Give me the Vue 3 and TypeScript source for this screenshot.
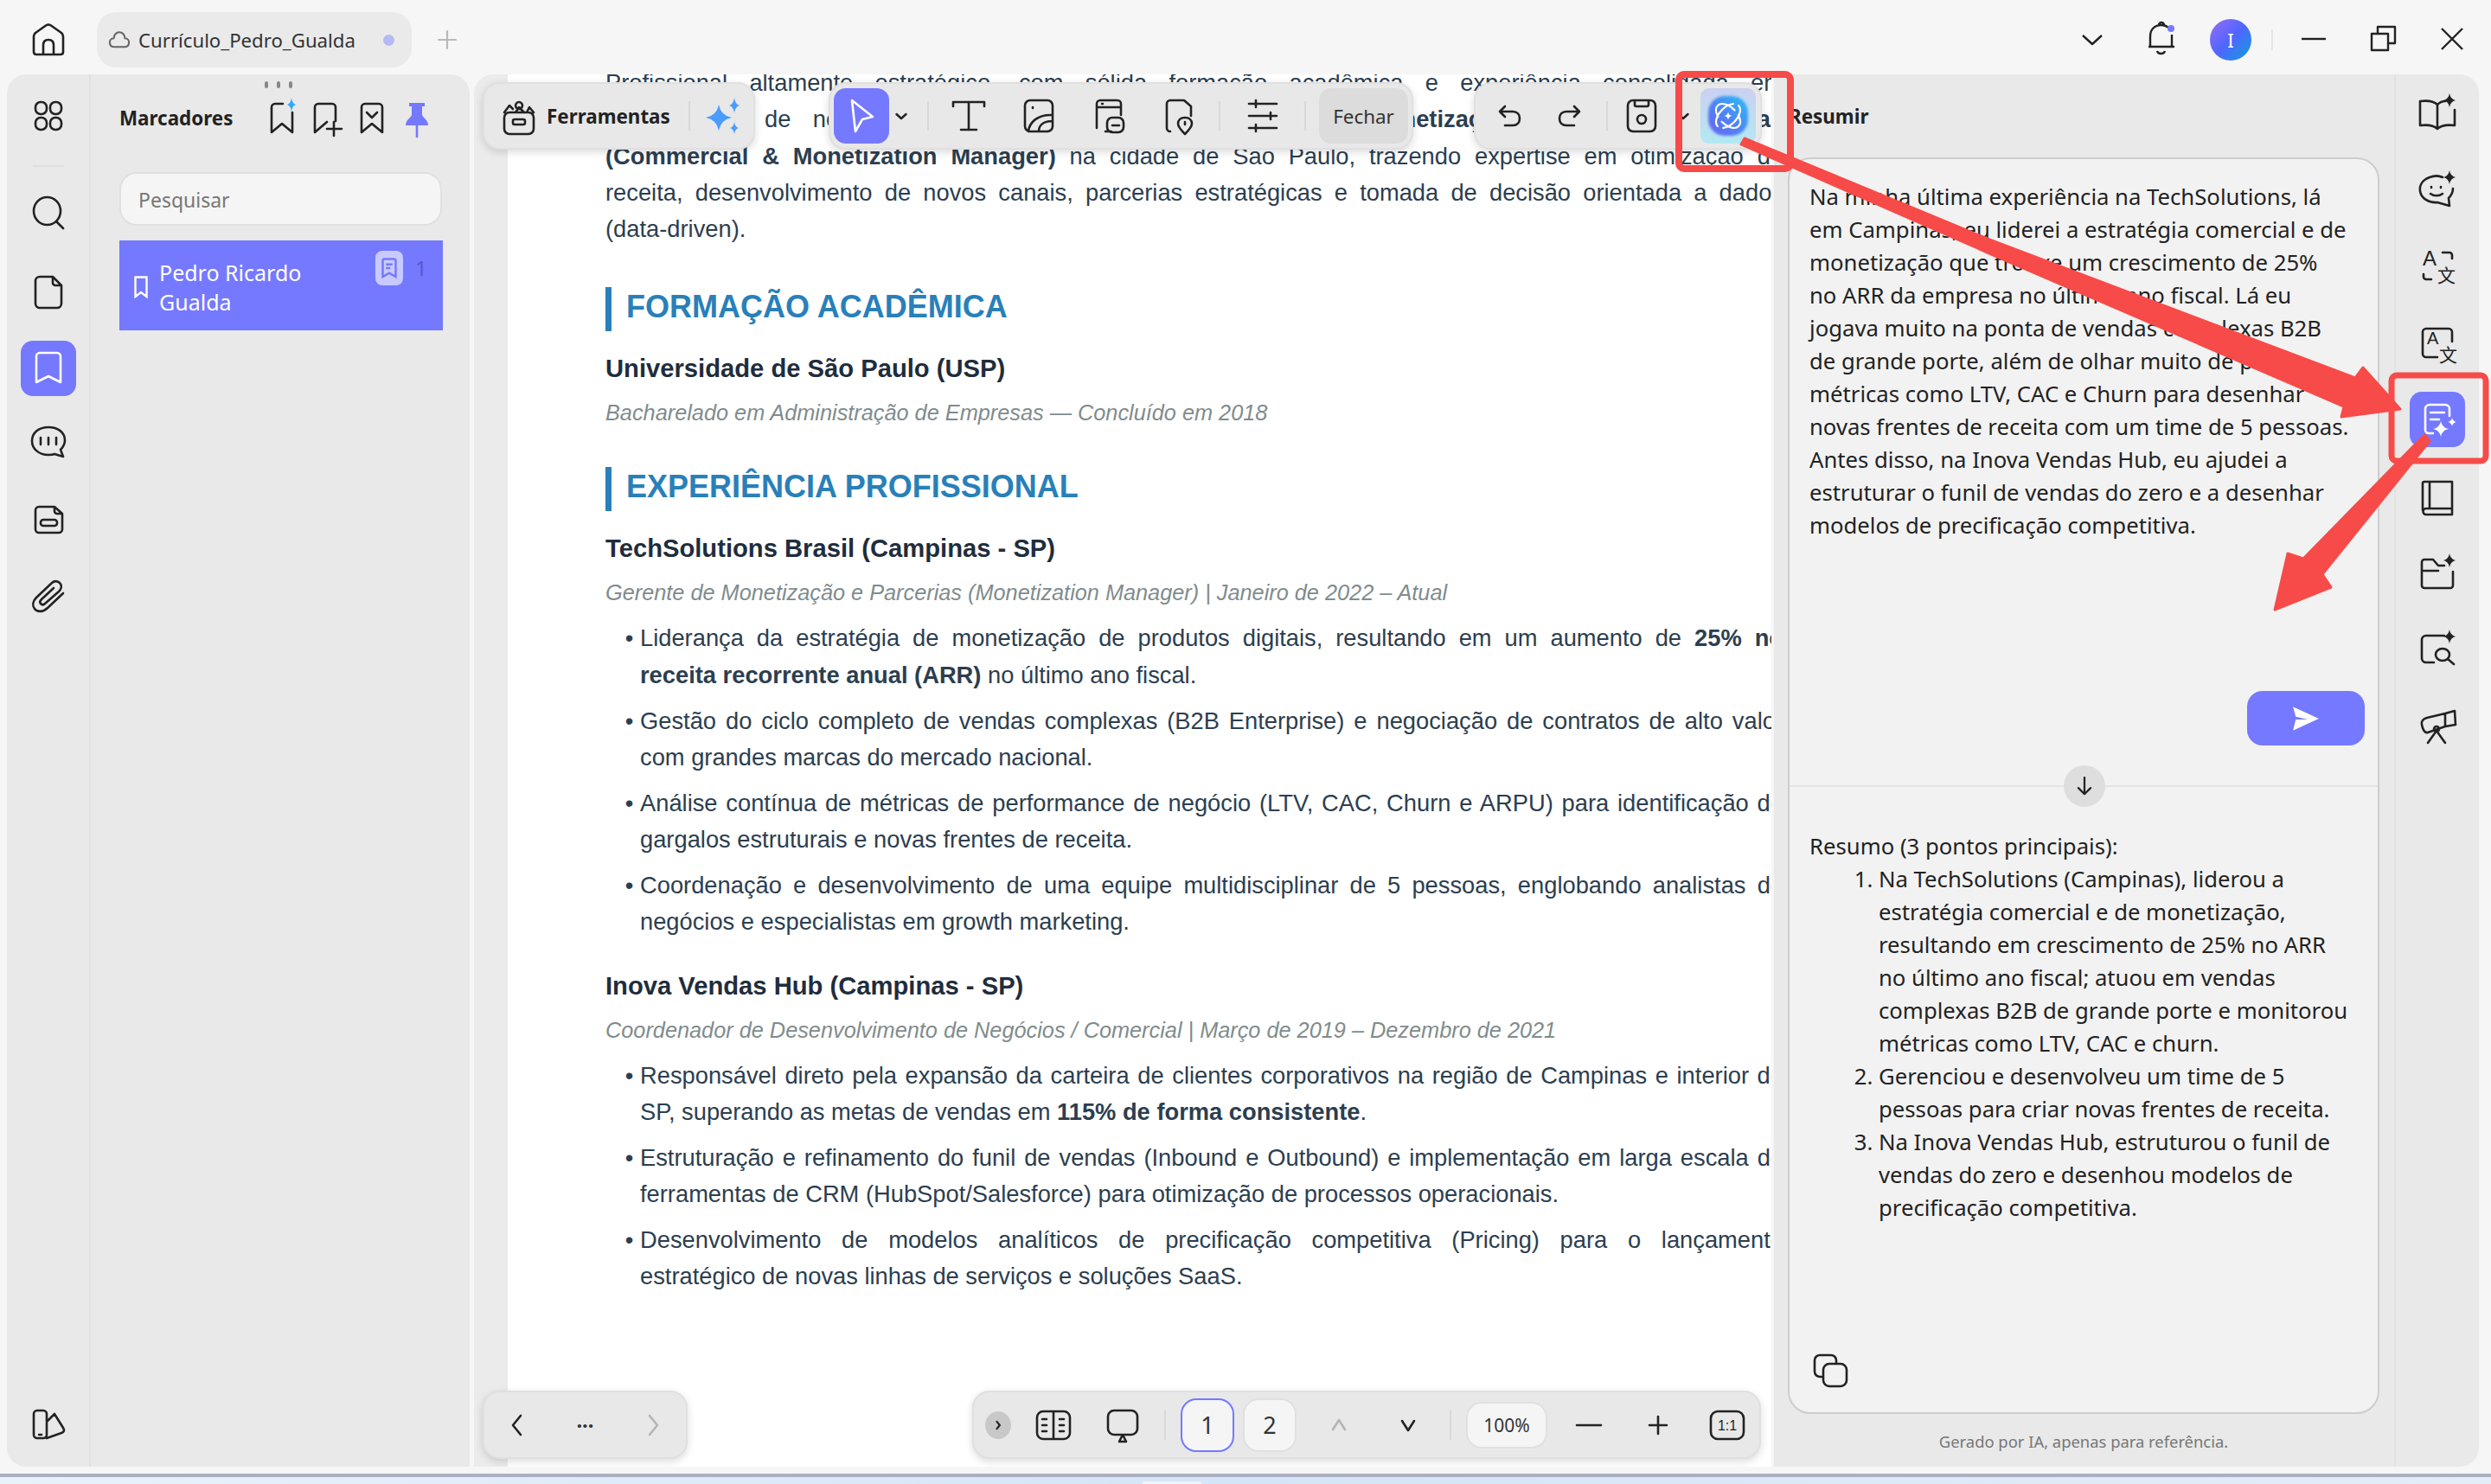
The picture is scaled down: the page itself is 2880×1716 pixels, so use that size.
<script setup lang="ts">
// helpers para montar os ícones (caixa de 48x48)
const rr = (x: number, y: number, w: number, h: number, r: number) =>
  `M${x + r} ${y}H${x + w - r}a${r} ${r} 0 0 1 ${r} ${r}V${y + h - r}a${r} ${r} 0 0 1 -${r} ${r}H${x + r}a${r} ${r} 0 0 1 -${r} -${r}V${y + r}a${r} ${r} 0 0 1 ${r} -${r}Z`
const star = (x: number, y: number, r: number, ry = r) => {
  const kx = r * 0.16
  const ky = ry * 0.16
  return `M${x} ${y - ry}Q${x + kx} ${y - ky} ${x + r} ${y}Q${x + kx} ${y + ky} ${x} ${y + ry}Q${x - kx} ${y + ky} ${x - r} ${y}Q${x - kx} ${y - ky} ${x} ${y - ry}Z`
}

const ic = {
  home: 'M7 20Q7 18 9 16L21 7.5Q24 5.5 27 7.5L39 16Q41 18 41 20V38Q41 41 38 41H10Q7 41 7 38ZM18 41V30Q18 24 24 24Q30 24 30 30V41',
  cloud: 'M14 38C8 38 5 34 5 29C5 24 9 21 13 21C13 14 18 9 24 9C30 9 35 14 35 21C40 21 43 25 43 29C43 34 40 38 34 38Z',
  grid: rr(9, 8, 13, 14, 6) + rr(26, 8, 13, 14, 6) + rr(9, 26, 13, 14, 6) + rr(26, 26, 13, 14, 6),
  search: 'M7 22a15.500 16 0 1 0 31 0a15.500 16 0 1 0 -31 0ZM33 34L41 42',
  page: 'M9 11a5 5 0 0 1 5-5H29L39 16V37a5 5 0 0 1 -5 5H14a5 5 0 0 1 -5-5ZM29 6V13a3 3 0 0 0 3 3H39',
  bookmark: 'M10 10a4 4 0 0 1 4-4H34a4 4 0 0 1 4 4V40L24 33L10 40Z',
  comment: 'M24 7C35 7 43 13 43 22C43 27 41 30 38 33L41 41L31 38C29 39 26 39 24 39C13 39 5 32 5 23C5 13 13 7 24 7ZM15 19V27M24 19V27M33 19V27',
  docSlot: 'M9 14a4 4 0 0 1 4-4H31L40 18V36a4 4 0 0 1 -4 4H13a4 4 0 0 1 -4-4ZM31 10V15a3 3 0 0 0 3 3H40' + rr(15, 25, 19, 7, 3),
  clip: 'M41 21L23 38C18 43 11 43 8 39C5 35 6 30 10 26L28 9C31 6 35 7 37 9C40 12 39 16 36 19L20 33C18 35 16 34 15 33C14 32 14 30 16 28L30 15',
  bookFan: rr(7, 8, 15, 32, 4) + 'M22 21L31 12L41 28C43 31 42 33 39 34L22 40M13 36H16',
  bmAi: 'M25 8H16a4 4 0 0 0 -4 4V41L24 31L36 41V18',
  bmPlus: 'M10 41V12a4 4 0 0 1 4-4H30a4 4 0 0 1 4 4V28M10 41L24 29M32 29V45M24 37H41',
  bmCheck: 'M12 12a4 4 0 0 1 4-4H32a4 4 0 0 1 4 4V41L24 31L12 41ZM18 18L24 24L30 18',
  pin: 'M15 7H33V11H30V21C32 25 37 27 37 33H11C11 27 16 25 18 21V11H15Z',
  toolbox: rr(7, 20, 34, 25, 6) + rr(17, 28, 14, 6, 2) + 'M24 8a4 4 0 1 0 0.100 0ZM7 20L13 12L17 16M20 20L24 14L30 20M33 20L36 14L41 20',
  cursor: 'M13 6L37 25L25 28L17 42Z',
  chev: 'M13 20L24 30L35 20',
  tee: 'M6 13V8H42V13M24 8V40M15 40H33',
  imgPage: rr(8, 6, 32, 36, 6) + 'M17 14v1M12 42C13 32 22 22 40 23M24 42C24 36 28 30 40 30',
  linkPage: 'M10 38V10a4 4 0 0 1 4-4H34a4 4 0 0 1 4 4V23M10 14H38M16 10h1M20 42H27M33 26H28a6 6 0 0 0 -6 6V37a6 6 0 0 0 6 6H35a6 6 0 0 0 6-6V32a6 6 0 0 0 -6-6ZM28 35H36',
  locPage: 'M14 42a4 4 0 0 1 -4-4V10a4 4 0 0 1 4-4H30L38 13V24M31 26C26 26 23 29 23 33C23 37 28 42 31 45C34 42 39 37 39 33C39 29 36 26 31 26ZM31 31v3',
  sliders: 'M8 10H40M8 24H40M8 38H40M16 6V14M33 20V28M16 34V42',
  undo: 'M19 13L13 19L19 25M13 19H28C33 19 36 22 36 27C36 32 33 35 28 35H19',
  redo: 'M29 13L35 19L29 25M35 19H20C15 19 12 22 12 27C12 32 15 35 20 35H29',
  save: rr(8, 6, 32, 36, 6) + 'M16 6V11a2 2 0 0 0 2 2H30a2 2 0 0 0 2-2V6M19 28a5 5 0 1 0 10 0a5 5 0 1 0 -10 0Z',
  bell: 'M11 33V21C11 13 16 8 24 8C27 8 30 9 32 11M36 19V33M9 33H39M19 38C20 42 27 42 28 38M21 8a3 3 0 0 1 6 0',
  min: 'M10 24H38',
  restore: 'M11 18H30V37H11ZM18 18V10H38V29H30',
  close: 'M12 12L36 36M36 12L12 36',
  plus: 'M14 24H34M24 14V34',
  left: 'M28 13L19 24L28 35',
  right: 'M20 13L29 24L20 35',
  up: 'M17 29L24 18L31 29',
  down: 'M17 19L24 30L31 19',
  bookView: rr(5, 8, 38, 32, 7) + 'M24 8V40M11 17h5M11 24h5M11 31h5M31 17h5M31 24h5M31 31h5',
  present: rr(7, 7, 34, 28, 7) + 'M24 35L20 43H28Z',
  one: rr(5, 8, 38, 32, 8),
  arrowDown: 'M24 10V37M14 27L24 37L34 27',
  copy: 'M14 31H12a6 6 0 0 1 -6-6V12a6 6 0 0 1 6-6H25a6 6 0 0 1 6 6V14' + rr(16, 16, 27, 26, 7),
  bookAi: 'M24 14C20 10 12 9 4 10V38C12 37 20 38 24 42C28 38 36 37 44 38V20M24 14V42M24 14C27 11 30 10 33 10',
  chatAi: 'M30 9C26 7 20 7 15 9C7 12 3 18 4 25C5 33 14 39 24 38L38 42L37 33C40 30 42 27 42 22M17 20v1M28 20v1M16 28C20 31 26 31 30 28',
  bracket: 'M30 8H38a3 3 0 0 1 3 3V15M8 33V36a3 3 0 0 0 3 3H17',
  boxLang: 'M41 22V11a4 4 0 0 0 -4-4H11a4 4 0 0 0 -4 4V36a4 4 0 0 0 4 4H24',
  sumDoc: 'M10 36V12a5 5 0 0 1 5-5H33a5 5 0 0 1 5 5V20M10 36a4 4 0 0 0 4 4H19M16 16H32M16 24H26',
  bookClosed: 'M7 40V9a2 2 0 0 1 2-2H41V38H11a3.500 3.500 0 0 0 0 7H41V38M15 7V38',
  folderAi: 'M6 17V11a3 3 0 0 1 3-3H19L25 15H32M6 17V38a3 3 0 0 0 3 3H39a3 3 0 0 0 3-3V22M6 21H25',
  searchAi: 'M32 8H11a5 5 0 0 0 -5 5V34a5 5 0 0 0 5 5H20M22 30a8 7 0 1 0 16 0a8 7 0 1 0 -16 0ZM36 35L43 41',
  scope: 'M6 22C5 18 8 15 12 14L33 9V24L13 31C9 32 7 27 6 22ZM33 9L44 6L45 22L33 24M23 29L13 43M23 29L33 43M20 27a3 3 0 1 0 6 0a3 3 0 1 0 -6 0Z',
}

const spark = {
  one: star(38, 9, 7, 8),
  ai: star(35, 9, 5, 8),
  trio: star(19, 26, 15, 15) + star(37, 12, 6, 9) + star(37, 38, 5, 7),
  sum: star(28, 35, 9) + star(41, 27, 5),
}

const rail = ['search', 'page'] as const
</script>

<template>
  <div class="app">
    <!-- barra de título -->
    <header class="titlebar">
      <svg class="ico home" viewBox="0 0 48 48"><path :d="ic.home" /></svg>
      <div class="tab">
        <svg class="ico cloud" viewBox="0 0 48 48"><path :d="ic.cloud" /></svg>
        <span class="tab-name">Currículo_Pedro_Gualda</span>
        <i class="tab-dot"></i>
      </div>
      <svg class="ico new-tab" viewBox="0 0 48 48"><path :d="ic.plus" /></svg>
      <div class="win">
        <svg class="ico thin" viewBox="0 0 48 48"><path :d="ic.chev" /></svg>
        <svg class="ico thin" viewBox="0 0 48 48">
          <path :d="ic.bell" />
          <circle class="violet" cx="35" cy="12" r="4" />
        </svg>
        <div class="avatar">I</div>
        <i class="win-sep"></i>
        <svg class="ico thin" viewBox="0 0 48 48"><path :d="ic.min" /></svg>
        <svg class="ico thin" viewBox="0 0 48 48"><path :d="ic.restore" /></svg>
        <svg class="ico thin" viewBox="0 0 48 48"><path :d="ic.close" /></svg>
      </div>
    </header>

    <main class="main">
      <!-- painel de marcadores -->
      <aside class="left">
        <nav class="rail">
          <svg class="ico r-first" viewBox="0 0 48 48"><path :d="ic.grid" /></svg>
          <hr class="rail-sep" />
          <div class="r-list">
            <svg v-for="n in rail" :key="n" class="ico" viewBox="0 0 48 48"><path :d="ic[n]" /></svg>
          </div>
          <div class="r-active">
            <svg class="ico" viewBox="0 0 48 48"><path :d="ic.bookmark" /></svg>
          </div>
          <svg class="ico r-item" viewBox="0 0 48 48"><path :d="ic.comment" /></svg>
          <svg class="ico r-item" viewBox="0 0 48 48"><path :d="ic.docSlot" /></svg>
          <svg class="ico r-item" viewBox="0 0 48 48"><path :d="ic.clip" /></svg>
          <svg class="ico r-bottom" viewBox="0 0 48 48"><path :d="ic.bookFan" /></svg>
        </nav>
        <section class="marks">
          <div class="grip"><i></i><i></i><i></i></div>
          <div class="marks-head">
            <h2 class="marks-title">Marcadores</h2>
            <svg class="ico" viewBox="0 0 48 48"><path :d="ic.bmAi" /><path class="sky" :d="spark.ai" /></svg>
            <svg class="ico" viewBox="0 0 48 48"><path :d="ic.bmPlus" /></svg>
            <svg class="ico" viewBox="0 0 48 48"><path :d="ic.bmCheck" /></svg>
            <svg class="ico" viewBox="0 0 48 48"><path class="violet" :d="ic.pin" /><path class="violet-line" d="M24 33V46" /></svg>
          </div>
          <div class="search">Pesquisar</div>
          <div class="mark-item">
            <svg class="mark-flag" viewBox="0 0 16 26"><path d="M1.500 1.500H14.500V24L8 19L1.500 24Z" /></svg>
            <span class="mark-text">Pedro Ricardo Gualda</span>
            <span class="mark-badge">
              <svg class="badge-ico" viewBox="0 0 48 48"><path d="M12 40V10a3 3 0 0 1 3-3H33a3 3 0 0 1 3 3V40L24 33ZM18 17H30M18 24H26" /></svg>
            </span>
            <span class="mark-num">1</span>
          </div>
        </section>
      </aside>

      <!-- documento -->
      <section class="viewer">
        <div class="gutter"></div>
        <article class="page">
          <div class="doc">
            <p class="ln just">Profissional altamente estratégico, com sólida formação acadêmica e experiência consolidada em</p>
            <p class="ln just">gestão B2B de negócios, busca a posição de <b>Gerente de Monetização, Vendas e Parcerias</b></p>
            <p class="ln just"><b>(Commercial &amp; Monetization Manager)</b> na cidade de São Paulo, trazendo expertise em otimização de</p>
            <p class="ln just">receita, desenvolvimento de novos canais, parcerias estratégicas e tomada de decisão orientada a dados</p>
            <p class="ln">(data-driven).</p>

            <h2 class="sec">FORMAÇÃO ACADÊMICA</h2>
            <h3 class="org">Universidade de São Paulo (USP)</h3>
            <p class="role">Bacharelado em Administração de Empresas — Concluído em 2018</p>

            <h2 class="sec sec2">EXPERIÊNCIA PROFISSIONAL</h2>
            <h3 class="org">TechSolutions Brasil (Campinas - SP)</h3>
            <p class="role">Gerente de Monetização e Parcerias (Monetization Manager) | Janeiro de 2022 – Atual</p>
            <ul class="list">
              <li>
                <span class="ln just">Liderança da estratégia de monetização de produtos digitais, resultando em um aumento de <b>25% no</b></span>
                <span class="ln"><b>receita recorrente anual (ARR)</b> no último ano fiscal.</span>
              </li>
              <li>
                <span class="ln just">Gestão do ciclo completo de vendas complexas (B2B Enterprise) e negociação de contratos de alto valor</span>
                <span class="ln">com grandes marcas do mercado nacional.</span>
              </li>
              <li>
                <span class="ln just">Análise contínua de métricas de performance de negócio (LTV, CAC, Churn e ARPU) para identificação de</span>
                <span class="ln">gargalos estruturais e novas frentes de receita.</span>
              </li>
              <li>
                <span class="ln just">Coordenação e desenvolvimento de uma equipe multidisciplinar de 5 pessoas, englobando analistas de</span>
                <span class="ln">negócios e especialistas em growth marketing.</span>
              </li>
            </ul>

            <h3 class="org org2">Inova Vendas Hub (Campinas - SP)</h3>
            <p class="role">Coordenador de Desenvolvimento de Negócios / Comercial | Março de 2019 – Dezembro de 2021</p>
            <ul class="list">
              <li>
                <span class="ln just">Responsável direto pela expansão da carteira de clientes corporativos na região de Campinas e interior de</span>
                <span class="ln">SP, superando as metas de vendas em <b>115% de forma consistente</b>.</span>
              </li>
              <li>
                <span class="ln just">Estruturação e refinamento do funil de vendas (Inbound e Outbound) e implementação em larga escala de</span>
                <span class="ln">ferramentas de CRM (HubSpot/Salesforce) para otimização de processos operacionais.</span>
              </li>
              <li>
                <span class="ln just">Desenvolvimento de modelos analíticos de precificação competitiva (Pricing) para o lançamento</span>
                <span class="ln">estratégico de novas linhas de serviços e soluções SaaS.</span>
              </li>
            </ul>
          </div>
        </article>

        <!-- barras flutuantes -->
        <div class="float tb-tools">
          <svg class="ico" viewBox="0 0 48 48"><path :d="ic.toolbox" /></svg>
          <span class="tb-label">Ferramentas</span>
          <i class="sep"></i>
          <svg class="ico" viewBox="0 0 48 48"><path class="blue-fill" :d="spark.trio" /></svg>
        </div>

        <div class="float tb-main">
          <button class="sel-btn">
            <svg class="ico" viewBox="0 0 48 48"><path :d="ic.cursor" /></svg>
          </button>
          <svg class="ico small" viewBox="0 0 48 48"><path :d="ic.chev" /></svg>
          <i class="sep wide sep-a"></i>
          <div class="tb-group">
            <svg class="ico" viewBox="0 0 48 48"><path :d="ic.tee" /></svg>
            <svg class="ico" viewBox="0 0 48 48"><path :d="ic.imgPage" /></svg>
            <svg class="ico" viewBox="0 0 48 48"><path :d="ic.linkPage" /></svg>
            <svg class="ico" viewBox="0 0 48 48"><path :d="ic.locPage" /></svg>
          </div>
          <i class="sep wide sep-b"></i>
          <svg class="ico" viewBox="0 0 48 48"><path :d="ic.sliders" /></svg>
          <i class="sep wide sep-c"></i>
          <button class="close-btn">Fechar</button>
        </div>

        <div class="float tb-edit">
          <svg class="ico" viewBox="0 0 48 48"><path :d="ic.undo" /></svg>
          <svg class="ico" viewBox="0 0 48 48"><path :d="ic.redo" /></svg>
          <i class="sep"></i>
          <svg class="ico" viewBox="0 0 48 48"><path :d="ic.save" /></svg>
          <svg class="ico small" viewBox="0 0 48 48"><path :d="ic.chev" /></svg>
          <div class="ai-btn">
            <svg class="ai-ico" viewBox="0 0 64 64">
              <defs>
                <linearGradient id="aiBg" x1="0" y1="0" x2="0" y2="1">
                  <stop offset="0" stop-color="#cbd0f2" />
                  <stop offset="1" stop-color="#b2e9f1" />
                </linearGradient>
                <linearGradient id="aiBall" x1="0" y1="1" x2="1" y2="0">
                  <stop offset="0" stop-color="#6a63f0" />
                  <stop offset="0.5" stop-color="#4c86f6" />
                  <stop offset="1" stop-color="#29c0f7" />
                </linearGradient>
                <filter id="aiSoft"><feGaussianBlur stdDeviation="1.400" /></filter>
              </defs>
              <rect width="64" height="64" rx="10" fill="url(#aiBg)" />
              <rect x="9" y="9" width="46" height="46" rx="19" fill="url(#aiBall)" filter="url(#aiSoft)" />
              <g fill="none" stroke="#fff" stroke-width="2.200" stroke-linecap="round">
                <ellipse cx="32" cy="32" rx="17" ry="10" transform="rotate(-45 32 32)" stroke-dasharray="36 7" />
                <ellipse cx="32" cy="32" rx="17" ry="10" transform="rotate(45 32 32)" stroke-dasharray="36 7" stroke-dashoffset="14" />
              </g>
              <path fill="#fff" :d="star(32, 32, 4.500, 4.500)" />
            </svg>
          </div>
        </div>

        <div class="float tb-nav">
          <svg class="ico" viewBox="0 0 48 48"><path :d="ic.left" /></svg>
          <span class="dots">···</span>
          <svg class="ico muted" viewBox="0 0 48 48"><path :d="ic.right" /></svg>
        </div>

        <div class="float tb-page">
          <span class="toggle"><svg viewBox="0 0 48 48" class="ico tiny"><path :d="ic.right" /></svg></span>
          <svg class="ico" viewBox="0 0 48 48"><path :d="ic.bookView" /></svg>
          <svg class="ico" viewBox="0 0 48 48"><path :d="ic.present" /></svg>
          <i class="sep"></i>
          <span class="pg on">1</span>
          <span class="pg">2</span>
          <svg class="ico muted" viewBox="0 0 48 48"><path :d="ic.up" /></svg>
          <svg class="ico" viewBox="0 0 48 48"><path :d="ic.down" /></svg>
          <i class="sep"></i>
          <span class="zoom">100%</span>
          <svg class="ico" viewBox="0 0 48 48"><path :d="ic.min" /></svg>
          <svg class="ico" viewBox="0 0 48 48"><path :d="ic.plus" /></svg>
          <svg class="ico" viewBox="0 0 48 48">
            <path :d="ic.one" />
            <text class="ico-txt" x="24" y="30" text-anchor="middle" font-size="16">1:1</text>
          </svg>
        </div>
      </section>

      <!-- painel de IA -->
      <aside class="ai">
        <div class="ai-main">
          <h2 class="ai-title">Resumir</h2>
          <div class="card">
            <div class="card-top">
              <p class="card-text">
                Na minha última experiência na TechSolutions, lá<br />
                em Campinas, eu liderei a estratégia comercial e de<br />
                monetização que trouxe um crescimento de 25%<br />
                no ARR da empresa no último ano fiscal. Lá eu<br />
                jogava muito na ponta de vendas complexas B2B<br />
                de grande porte, além de olhar muito de perto<br />
                métricas como LTV, CAC e Churn para desenhar<br />
                novas frentes de receita com um time de 5 pessoas.<br />
                Antes disso, na Inova Vendas Hub, eu ajudei a<br />
                estruturar o funil de vendas do zero e a desenhar<br />
                modelos de precificação competitiva.
              </p>
              <button class="send">
                <svg viewBox="0 0 30 28" class="send-ico"><path d="M1 1L29 14L1 27L4 15H17L4 12Z" /></svg>
              </button>
              <span class="scroll-down">
                <svg class="ico" viewBox="0 0 48 48"><path :d="ic.arrowDown" /></svg>
              </span>
            </div>
            <div class="card-bottom">
              <p class="card-text">Resumo (3 pontos principais):</p>
              <ol class="sum">
                <li>Na TechSolutions (Campinas), liderou a<br />estratégia comercial e de monetização,<br />resultando em crescimento de 25% no ARR<br />no último ano fiscal; atuou em vendas<br />complexas B2B de grande porte e monitorou<br />métricas como LTV, CAC e churn.</li>
                <li>Gerenciou e desenvolveu um time de 5<br />pessoas para criar novas frentes de receita.</li>
                <li>Na Inova Vendas Hub, estruturou o funil de<br />vendas do zero e desenhou modelos de<br />precificação competitiva.</li>
              </ol>
              <svg class="ico copy" viewBox="0 0 48 48"><path :d="ic.copy" /></svg>
            </div>
          </div>
          <p class="ai-note">Gerado por IA, apenas para referência.</p>
        </div>
        <nav class="ai-rail">
          <svg class="ico" viewBox="0 0 48 48"><path :d="ic.bookAi" /><path class="ink" :d="spark.one" /></svg>
          <svg class="ico" viewBox="0 0 48 48"><path :d="ic.chatAi" /><path class="ink" :d="spark.one" /></svg>
          <svg class="ico" viewBox="0 0 48 48">
            <path :d="ic.bracket" />
            <text class="ico-txt" x="7" y="23" font-size="24">A</text>
            <text class="ico-txt cjk" x="24" y="42" font-size="21">文</text>
          </svg>
          <svg class="ico" viewBox="0 0 48 48">
            <path :d="ic.boxLang" />
            <text class="ico-txt" x="12" y="25" font-size="20">A</text>
            <text class="ico-txt cjk" x="26" y="45" font-size="21">文</text>
          </svg>
          <div class="ai-active">
            <svg class="ico" viewBox="0 0 48 48"><path :d="ic.sumDoc" /><path class="white-fill" :d="spark.sum" /></svg>
          </div>
          <svg class="ico" viewBox="0 0 48 48"><path :d="ic.bookClosed" /></svg>
          <svg class="ico" viewBox="0 0 48 48"><path :d="ic.folderAi" /><path class="ink" :d="spark.one" /></svg>
          <svg class="ico" viewBox="0 0 48 48"><path :d="ic.searchAi" /><path class="ink" :d="spark.one" /></svg>
          <svg class="ico" viewBox="0 0 48 48"><path :d="ic.scope" /></svg>
        </nav>
      </aside>
    </main>

    <!-- faixa da área de trabalho -->
    <footer class="desk"><i class="desk-tab"></i></footer>

    <!-- anotações em vermelho sobre a captura -->
    <svg class="marks-overlay" viewBox="0 0 2880 1716">
      <g fill="#f74b49" stroke="#f74b49" stroke-linejoin="round" stroke-width="3">
        <path d="M2017 160L2300 277L2723 437L2732 425L2775 473L2707 482L2710 470L2300 293L2013 167Z" />
        <path d="M2803 503L2809 510L2685 664L2695 679L2630 705L2645 640L2663 646Z" />
      </g>
      <g fill="none" stroke="#f74b49" stroke-linejoin="round">
        <rect x="1941" y="86" width="129" height="109" rx="6" stroke-width="8" />
        <rect x="2765" y="434" width="109" height="99" rx="6" stroke-width="7" />
      </g>
    </svg>
  </div>
</template>

<style scoped>
.app {
  position: relative;
  width: 2880px;
  height: 1716px;
  display: flex;
  flex-direction: column;
  overflow: hidden;
  background: #f6f6f6;
  color: #222;
  font-family: "Noto Sans", sans-serif;
}

.ico {
  width: 48px;
  height: 48px;
  flex: none;
  fill: none;
  stroke: #222;
  stroke-width: 2.6;
  stroke-linecap: round;
  stroke-linejoin: round;
}
.ico.thin { stroke-width: 2.4; stroke-linecap: butt; }
.ico.small { width: 24px; height: 24px; stroke-width: 5; }
.ico.tiny { width: 18px; height: 18px; stroke-width: 6; }
.ico.muted { stroke: #b5b5b5; }
.ico-txt {
  fill: #222;
  stroke: none;
  font-family: "Liberation Sans", sans-serif;
}
.ico-txt.cjk { font-family: "Noto Sans CJK SC", sans-serif; }
.ink { fill: #222; stroke: none; }
.sky { fill: #35a7ff; stroke: none; }
.violet { fill: #7579ff; stroke: none; }
.violet-line { stroke: #7579ff; }
.blue-fill { fill: #4a9cff; stroke: none; }
.white-fill { fill: #fff; stroke: none; }

/* barra de título */
.titlebar {
  height: 86px;
  flex: none;
  box-sizing: border-box;
  display: flex;
  align-items: center;
  padding: 6px 0 0 32px;
}
.tab {
  margin-left: 32px;
  width: 364px;
  height: 64px;
  border-radius: 22px;
  background: #eaeaea;
  display: flex;
  align-items: center;
  padding-left: 12px;
  box-sizing: border-box;
}
.cloud { width: 28px; height: 28px; stroke: #666; stroke-width: 3.500; }
.tab-name { margin-left: 8px; font-size: 22.200px; color: #333; white-space: nowrap; }
.tab-dot {
  width: 13px;
  height: 13px;
  border-radius: 50%;
  background: #b6b9f6;
  margin-left: 32px;
}
.new-tab { margin-left: 17px; stroke: #b9b9b9; stroke-width: 2.200; }
.win {
  margin-left: auto;
  display: flex;
  align-items: center;
  gap: 32px;
  padding-right: 21px;
}
.win .thin { margin-top: -2px; }
.win-sep {
  width: 2px;
  height: 24px;
  background: #e6e6e6;
  margin: 0 -9px;
}
.avatar {
  width: 48px;
  height: 48px;
  border-radius: 50%;
  background: linear-gradient(135deg, #9a6cf5, #4f66ff 50%, #0f9fd8);
  color: #fff;
  font-size: 22px;
  display: flex;
  align-items: center;
  justify-content: center;
}

/* corpo */
.main {
  flex: 1;
  min-height: 0;
  display: flex;
  padding-left: 8px;
  padding-right: 14px;
}
.left {
  width: 535px;
  flex: none;
  display: flex;
  background: #e9e9e9;
  border-radius: 22px 22px 0 22px;
}
.rail {
  width: 97px;
  flex: none;
  box-sizing: border-box;
  border-right: 2px solid #e1e1e1;
  display: flex;
  flex-direction: column;
  align-items: center;
  padding-top: 24px;
}
.rail-sep {
  width: 36px;
  height: 2px;
  border: 0;
  background: #dedede;
  margin: 33px 0 29px;
}
.r-list {
  display: flex;
  flex-direction: column;
  align-items: center;
  gap: 44px;
}
.r-active {
  margin-top: 32px;
  width: 64px;
  height: 64px;
  border-radius: 14px;
  background: #7579ff;
  display: flex;
  align-items: center;
  justify-content: center;
}
.r-active .ico { stroke: #fff; }
.r-item { margin-top: 41px; }
.r-active + .r-item { margin-top: 29px; }
.r-bottom { margin-top: auto; margin-bottom: 25px; }

.marks {
  flex: 1;
  position: relative;
  padding-left: 33px;
}
.grip {
  position: absolute;
  left: 201px;
  top: 8px;
  display: flex;
  gap: 10px;
}
.grip i {
  width: 4px;
  height: 8px;
  border-radius: 2px;
  background: #888;
}
.marks-head {
  height: 100px;
  display: flex;
  align-items: center;
  gap: 4px;
}
.marks-title {
  width: 160px;
  margin: 0;
  font-size: 22.400px;
  font-weight: 700;
  color: #222;
}
.search {
  margin-top: 13px;
  width: 373px;
  height: 62px;
  box-sizing: border-box;
  border: 2px solid #e0e0e0;
  border-radius: 20px;
  background: #f5f5f5;
  padding-left: 20px;
  line-height: 60px;
  font-size: 23px;
  color: #777;
}
.mark-item {
  margin-top: 17px;
  width: 374px;
  height: 104px;
  box-sizing: border-box;
  background: #7579ff;
  display: flex;
  align-items: flex-start;
  padding-left: 17px;
}
.mark-flag {
  width: 16px;
  height: 26px;
  margin-top: 41px;
  fill: none;
  stroke: #fff;
  stroke-width: 2.400;
}
.mark-text {
  width: 230px;
  margin: 20px 0 0 13px;
  font-size: 25px;
  line-height: 34px;
  color: #fff;
}
.mark-badge {
  width: 32px;
  height: 40px;
  margin: 12px 0 0 20px;
  border-radius: 8px;
  background: #c8caff;
  display: flex;
  align-items: center;
  justify-content: center;
}
.badge-ico {
  width: 30px;
  height: 30px;
  fill: none;
  stroke: #7579ff;
  stroke-width: 4;
}
.mark-num {
  margin: 12px 0 0 14px;
  font-size: 24px;
  line-height: 40px;
  color: #5659c6;
}

/* documento */
.viewer {
  width: 1500px;
  flex: none;
  margin-left: 5px;
  position: relative;
  display: flex;
  overflow: hidden;
}
.gutter {
  width: 39px;
  flex: none;
  background: #ebebeb;
  border-radius: 22px 0 0 0;
}
.page {
  flex: 1;
  background: #fff;
  overflow: hidden;
  padding-left: 113px;
}
.doc {
  width: 1362px;
  margin-top: -11px;
  font-family: "Liberation Sans", Arial, sans-serif;
  font-size: 27.300px;
  color: #2c3e50;
}
.ln {
  display: block;
  margin: 0;
  line-height: 42.300px;
}
.just {
  text-align: justify;
  text-align-last: justify;
}
.sec {
  margin: 46px 0 3px;
  height: 51px;
  box-sizing: border-box;
  border-left: 7px solid #2980b9;
  padding-left: 17px;
  line-height: 46px;
  font-size: 36px;
  font-weight: 700;
  color: #2980b9;
}
.sec2 { margin: 44px 0 0; }
.org {
  margin: 23px 0 0;
  line-height: 40px;
  font-size: 29.200px;
  font-weight: 700;
  color: #1f2d3d;
}
.org2 { margin-top: 32px; }
.role {
  margin: 12px 0 0;
  line-height: 38px;
  font-size: 25.300px;
  font-style: italic;
  color: #7f8c8d;
}
.list {
  margin: 13px 0 0;
  padding: 0 0 0 40px;
  list-style-type: "• ";
}
.list li + li { margin-top: 10.600px; }

/* barras flutuantes */
.float {
  position: absolute;
  box-sizing: border-box;
  height: 78px;
  display: flex;
  align-items: center;
  background: #e8e8e8;
  border: 2px solid #e0e0e0;
  border-radius: 20px;
  box-shadow: 0 3px 10px rgba(0, 0, 0, 0.14);
}
.sep {
  width: 2px;
  height: 34px;
  flex: none;
  background: #d8d8d8;
}
.sep.wide { margin: 0 22px; }
.sep.sep-a { margin-left: 18px; }
.sep.sep-b { margin-right: 25px; }
.sep.sep-c { margin-left: 24px; }
.tb-tools {
  left: 10px;
  top: 9px;
  width: 315px;
  padding-left: 16px;
}
.tb-label {
  margin-left: 8px;
  font-size: 22.400px;
  font-weight: 700;
  color: #222;
}
.tb-tools .sep { margin: 0 14px 0 21px; }
.tb-main {
  left: 410px;
  top: 9px;
  width: 676px;
  padding-left: 4px;
}
.sel-btn {
  width: 64px;
  height: 64px;
  border: 0;
  padding: 0;
  border-radius: 14px;
  background: #7579ff;
  display: flex;
  align-items: center;
  justify-content: center;
  margin-right: 2px;
}
.sel-btn .ico { stroke: #fff; }
.tb-group { display: flex; gap: 33px; }
.close-btn {
  margin-left: -7px;
  width: 103px;
  height: 64px;
  border: 0;
  padding: 0;
  border-radius: 14px;
  background: #dcdcdc;
  font-family: inherit;
  font-size: 22.400px;
  color: #333;
}
.tb-edit {
  left: 1156px;
  top: 9px;
  width: 333px;
  padding-left: 15px;
  gap: 22px;
}
.tb-edit .small { margin-left: -10px; }
.tb-edit .sep { margin: 0 -7px 0 -4px; }
.ai-btn {
  width: 64px;
  height: 64px;
  margin-left: -14px;
}
.ai-ico { width: 64px; height: 64px; display: block; }
.tb-nav {
  left: 10px;
  bottom: 9px;
  height: 79px;
  width: 237px;
  padding: 0 14px;
  justify-content: space-between;
}
.dots { font-size: 24px; font-weight: 700; color: #333; }
.tb-page {
  left: 576px;
  bottom: 9px;
  height: 79px;
  width: 912px;
  padding-left: 13px;
  gap: 0;
}
.toggle {
  width: 30px;
  height: 32px;
  flex: none;
  border-radius: 50%;
  background: #c8c8c8;
  display: flex;
  align-items: center;
  justify-content: center;
  margin-right: 25px;
}
.tb-page > .ico { margin-right: 32px; }
.tb-page > .ico:last-child { margin-right: 0; }
.tb-page .sep { margin: 0 17px 0 -8px; }
.pg {
  width: 62px;
  height: 62px;
  flex: none;
  box-sizing: border-box;
  border: 2px solid #e0e0e0;
  border-radius: 18px;
  background: #f5f5f5;
  margin-right: 10px;
  text-align: center;
  line-height: 58px;
  font-size: 27px;
  color: #333;
}
.pg.on { border-color: #7579ff; }
.pg + .pg { margin-right: 25px; }
.zoom {
  width: 94px;
  height: 54px;
  flex: none;
  box-sizing: border-box;
  border: 2px solid #e0e0e0;
  border-radius: 18px;
  background: #f5f5f5;
  margin-right: 24px;
  text-align: center;
  line-height: 50px;
  font-size: 21px;
  color: #333;
}

/* painel de IA */
.ai {
  flex: 1;
  margin-left: 3px;
  display: flex;
  background: #e9e9e9;
  border-radius: 0 22px 22px 0;
}
.ai-main {
  width: 717px;
  flex: none;
  display: flex;
  flex-direction: column;
  box-sizing: border-box;
  padding-left: 16px;
}
.ai-title {
  height: 96px;
  margin: 0;
  flex: none;
  padding-left: 1px;
  line-height: 98px;
  font-size: 22.400px;
  font-weight: 700;
  color: #222;
}
.card {
  width: 684px;
  height: 1453px;
  box-sizing: border-box;
  border: 2px solid #cdcdcd;
  border-radius: 26px;
  background: #f2f2f2;
  display: flex;
  flex-direction: column;
}
.card-top {
  position: relative;
  height: 726px;
  flex: none;
  box-sizing: border-box;
  border-bottom: 2px solid #e4e4e4;
  padding: 25px 0 0 23px;
}
.card-text {
  margin: 0;
  font-size: 25.700px;
  line-height: 38px;
  color: #222;
  white-space: nowrap;
}
.send {
  position: absolute;
  right: 15px;
  bottom: 46px;
  width: 136px;
  height: 63px;
  border: 0;
  padding: 0;
  border-radius: 18px;
  background: #7579ff;
  display: flex;
  align-items: center;
  justify-content: center;
}
.send-ico { width: 32px; height: 30px; fill: #fff; }
.scroll-down {
  position: absolute;
  left: 317px;
  bottom: -25px;
  width: 48px;
  height: 48px;
  border-radius: 50%;
  background: #dedede;
  display: flex;
  align-items: center;
  justify-content: center;
}
.scroll-down .ico { width: 34px; height: 34px; stroke-width: 3.200; }
.card-bottom {
  flex: 1;
  display: flex;
  flex-direction: column;
  padding: 50px 0 0 23px;
}
.sum {
  margin: 0;
  padding: 0 0 0 80px;
  font-size: 25.700px;
  line-height: 38px;
  color: #222;
  white-space: nowrap;
}
.copy {
  margin: auto 0 24px 0;
}
.ai-note {
  margin: 18px 0 0;
  width: 684px;
  text-align: center;
  font-size: 18.400px;
  line-height: 28px;
  color: #777;
}
.ai-rail {
  flex: 1;
  border-left: 2px solid #e2e2e2;
  display: flex;
  flex-direction: column;
  align-items: center;
  padding-top: 21px;
  gap: 40.600px;
}
.ai-active {
  width: 64px;
  height: 64px;
  margin: -8px 0;
  border-radius: 14px;
  background: #7579ff;
  display: flex;
  align-items: center;
  justify-content: center;
}
.ai-active .ico { stroke: #fff; }

/* faixa inferior */
.desk {
  flex: none;
  box-sizing: border-box;
  margin-top: 8px;
  height: 12px;
  border-top: 4px solid #aab0c0;
  background: linear-gradient(90deg, #e9f1fb, #d6e4f9 50%, #e4ecf8);
  display: flex;
  justify-content: center;
  align-items: flex-end;
}
.desk-tab {
  width: 68px;
  height: 3px;
  background: #f0f3f9;
  margin-right: 170px;
}

.marks-overlay {
  position: absolute;
  inset: 0;
  width: 2880px;
  height: 1716px;
  pointer-events: none;
}
</style>

<style>
html,
body {
  margin: 0;
  background: #f6f6f6;
}
</style>
